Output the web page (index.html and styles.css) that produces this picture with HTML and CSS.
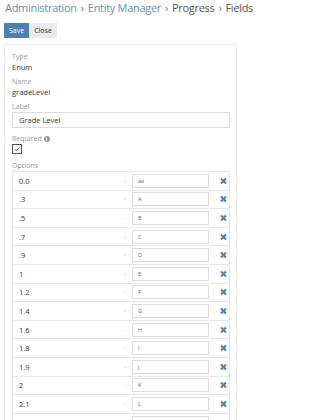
FILE: index.html
```html
<!DOCTYPE html>
<html>
<head>
<meta charset="utf-8">
<link rel="stylesheet" href="styles.css">
</head>
<body>
<div class="page">
  <div class="breadcrumb">
    <a class="crumb-link">Administration</a><span class="sep">›</span><a class="crumb-link">Entity Manager</a><span class="sep">›</span><span class="crumb">Progress</span><span class="sep">›</span><span class="crumb">Fields</span>
  </div>
  <div class="buttons">
    <button class="btn btn-primary">Save</button><button class="btn btn-default">Close</button>
  </div>
  <div class="panel">
    <div class="field">
      <div class="label">Type</div>
      <div class="value">Enum</div>
    </div>
    <div class="field">
      <div class="label">Name</div>
      <div class="value">gradeLevel</div>
    </div>
    <div class="field field-label">
      <div class="label">Label</div>
      <div class="input">Grade Level</div>
    </div>
    <div class="field field-required">
      <div class="label">Required <span class="info">i</span></div>
      <div class="checkbox">
        <svg viewBox="0 0 10 10" width="10" height="10"><path d="M2 5.2 L4 7.4 L8.2 2.6" fill="none" stroke="#333" stroke-width="0.9"/></svg>
      </div>
    </div>
    <div class="field">
      <div class="label">Options</div>
      <div class="options">
        <div class="row"><span class="opt">0.0</span><span class="dash">-</span><span class="tr">aa</span><span class="x"></span></div>
        <div class="row"><span class="opt">.3</span><span class="dash">-</span><span class="tr">A</span><span class="x"></span></div>
        <div class="row"><span class="opt">.5</span><span class="dash">-</span><span class="tr">B</span><span class="x"></span></div>
        <div class="row"><span class="opt">.7</span><span class="dash">-</span><span class="tr">C</span><span class="x"></span></div>
        <div class="row"><span class="opt">.9</span><span class="dash">-</span><span class="tr">D</span><span class="x"></span></div>
        <div class="row"><span class="opt">1</span><span class="dash">-</span><span class="tr">E</span><span class="x"></span></div>
        <div class="row"><span class="opt">1.2</span><span class="dash">-</span><span class="tr">F</span><span class="x"></span></div>
        <div class="row"><span class="opt">1.4</span><span class="dash">-</span><span class="tr">G</span><span class="x"></span></div>
        <div class="row"><span class="opt">1.6</span><span class="dash">-</span><span class="tr">H</span><span class="x"></span></div>
        <div class="row"><span class="opt">1.8</span><span class="dash">-</span><span class="tr">I</span><span class="x"></span></div>
        <div class="row"><span class="opt">1.9</span><span class="dash">-</span><span class="tr">J</span><span class="x"></span></div>
        <div class="row"><span class="opt">2</span><span class="dash">-</span><span class="tr">K</span><span class="x"></span></div>
        <div class="row"><span class="opt">2.1</span><span class="dash">-</span><span class="tr">L</span><span class="x"></span></div>
        <div class="row"><span class="opt">2.3</span><span class="dash">-</span><span class="tr">M</span><span class="x"></span></div>
      </div>
    </div>
  </div>
</div>
</body>
</html>
```
FILE: styles.css
```css
html, body {
  margin: 0;
  padding: 0;
  background: #fff;
  font-family: "Open Sans", "Liberation Sans", sans-serif;
  color: #333;
}
.page {
  padding: 0 0 0 4px;
  height: 420px;
  overflow: hidden;
}
.breadcrumb {
  font-size: 11px;
  line-height: 16px;
  white-space: nowrap;
  letter-spacing: -0.3px;
  margin-left: 1px;
}
.crumb-link { color: #6c8fb4; }
.crumb { color: #555; }
.sep { color: #777; margin: 0 4px; }
.buttons {
  display: flex;
  margin-top: 7px;
}
.btn {
  font-family: inherit;
  font-size: 7px;
  height: 15px;
  border: 0;
  padding: 0;
  margin: 0;
  line-height: 15px;
  text-align: center;
}
.btn-primary {
  background: #4d7fb0;
  color: #fff;
  width: 25px;
}
.btn-default {
  background: #e7ebed;
  color: #333;
  width: 28px;
}
.panel {
  width: 233px;
  box-sizing: border-box;
  margin-top: 6px;
  border: 1px solid #eceeef;
  border-bottom: 0;
  padding: 7px 7px 0 7px;
}
.field { margin-bottom: 4px; }
.field-label { margin-bottom: 6px; }
.field-required { margin-bottom: 7px; }
.label {
  font-size: 7px;
  color: #9a9a9a;
  line-height: 9px;
}
.value {
  font-size: 7.5px;
  color: #333;
  line-height: 12px;
}
.info {
  display: inline-block;
  width: 6px;
  height: 6px;
  border-radius: 50%;
  background: #999;
  color: #fff;
  font-size: 5px;
  line-height: 6px;
  text-align: center;
  font-weight: bold;
}
.input {
  margin-top: 1px;
  height: 16px;
  border: 1px solid #ddd;
  box-sizing: border-box;
  font-size: 7.5px;
  line-height: 14px;
  padding-left: 6px;
  color: #333;
  width: 218px;
}
.checkbox {
  margin-top: 1px;
  width: 10px;
  height: 10px;
  border: 1px solid #555;
  box-sizing: border-box;
  display: flex;
  align-items: center;
  justify-content: center;
}
.checkbox svg { width: 8px; height: 8px; }
.options {
  margin-top: 1px;
  width: 218px;
  border: 1px solid #e8e8e8;
  border-bottom: 0;
  box-sizing: border-box;
}
.row {
  display: grid;
  grid-template-columns: 119px 77px 1fr;
  align-items: center;
  height: 18.6px;
  border-bottom: 1px solid #e8e8e8;
  box-sizing: border-box;
  font-size: 7.5px;
  position: relative;
}
.opt {
  padding-left: 6px;
  color: #333;
}
.dash {
  position: absolute;
  left: 111px;
  color: #999;
  font-size: 6px;
}
.tr {
  height: 14px;
  border: 1px solid #ddd;
  box-sizing: border-box;
  font-size: 5.5px;
  line-height: 12px;
  padding-left: 5px;
  color: #666;
}
.x {
  margin-left: 11.5px;
  width: 6px;
  height: 6px;
  position: relative;
}
.x::before, .x::after {
  content: "";
  position: absolute;
  left: -0.5px;
  top: 2px;
  width: 7px;
  height: 2px;
  background: #4d7fb0;
  transform: rotate(45deg);
}
.x::after { transform: rotate(-45deg); }
```
